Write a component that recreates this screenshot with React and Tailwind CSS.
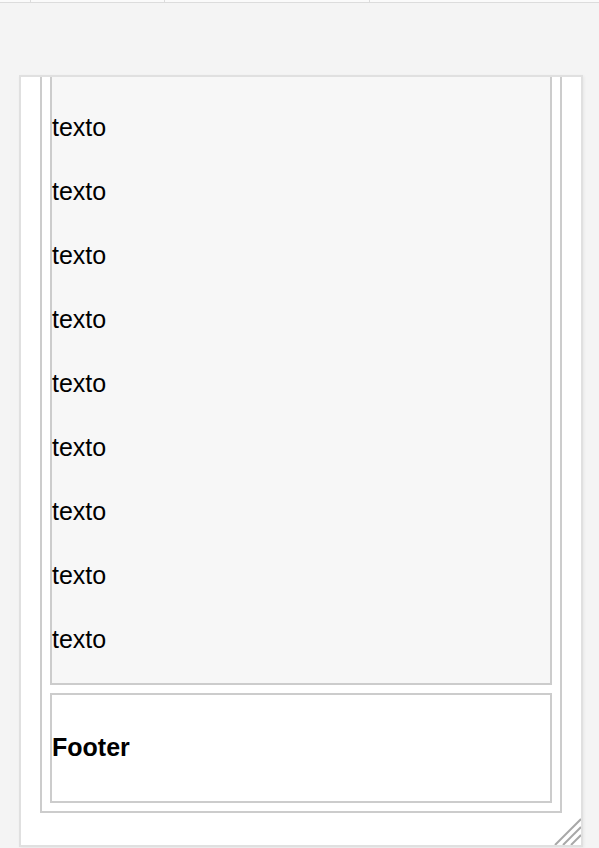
import React from "react";

const LINES = Array.from({ length: 9 }, () => "texto");

function ResizeGrip() {
  return (
    <svg
      className="absolute right-0 bottom-0"
      width="30"
      height="30"
      viewBox="0 0 30 30"
      fill="none"
      stroke="#a8a8a8"
      strokeWidth="2"
    >
      <line x1="4" y1="30" x2="30" y2="4" />
      <line x1="12" y1="30" x2="30" y2="12" />
      <line x1="20" y1="30" x2="30" y2="20" />
    </svg>
  );
}

export default function App() {
  return (
    <div className="min-h-screen bg-[#f4f4f4] font-['Liberation_Sans',Arial,sans-serif] text-black">
      {/* Tab strip remnant */}
      <div className="h-[3px] flex bg-[#fafafa] border-b border-[#dcdcdc]">
        <div className="w-[31px] border-r border-[#dcdcdc]" />
        <div className="w-[134px] border-r border-[#dcdcdc]" />
        <div className="w-[205px] border-r border-[#dcdcdc]" />
        <div className="flex-1" />
      </div>

      <div className="pt-[72px] pl-[19px]">
        {/* Resizable panel */}
        <div className="relative w-[564px] bg-white border-2 border-[#e0e0e0] px-[19px] pb-[32px] overflow-hidden shadow-[1px_1px_3px_rgba(0,0,0,0.06)]">
          <div className="border-2 border-t-0 border-[#cccccc] px-2 pb-2 flex flex-col gap-2">
            {/* Scrolled content */}
            <div className="border-2 border-t-0 border-[#cccccc] bg-[#f7f7f7] pt-[6px]">
              {LINES.map((t, i) => (
                <p key={i} className="my-6 text-[25px] leading-[40px]">
                  {t}
                </p>
              ))}
            </div>

            {/* Footer */}
            <div className="border-2 border-[#cccccc] bg-white h-[110px] flex items-center">
              <h3 className="text-[25px] font-bold">Footer</h3>
            </div>
          </div>
          <ResizeGrip />
        </div>
      </div>
    </div>
  );
}
